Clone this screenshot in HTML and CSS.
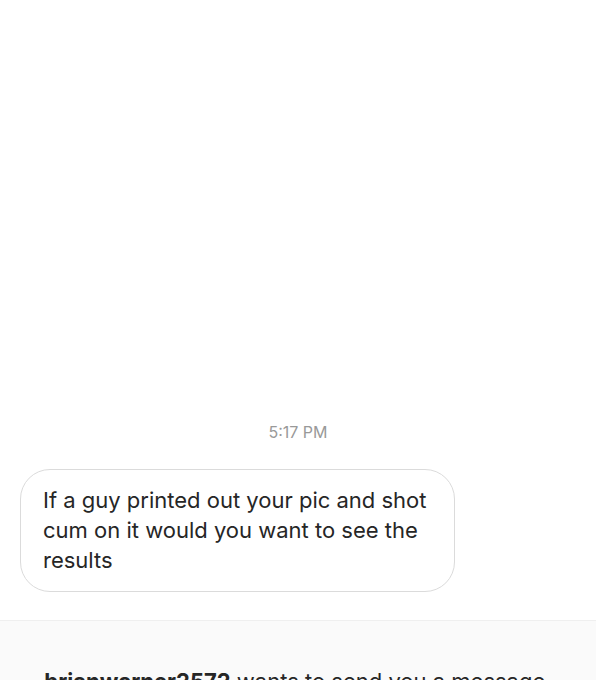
FILE: index.html
```html
<!DOCTYPE html>
<html lang="en">
<head>
<meta charset="utf-8">
<title>Message request</title>
<link rel="stylesheet" href="styles.css">
</head>
<body>
<div class="screen">
  <main class="thread">
    <div class="timestamp">5:17 PM</div>
    <div class="bubble">If a guy printed out your pic and shot cum on it would you want to see the results</div>
  </main>
  <footer class="request">
    <p class="request-text"><strong>brianwarner2572</strong> wants to send you a message.</p>
  </footer>
</div>
</body>
</html>
```
FILE: styles.css
```css
html, body {
  margin: 0;
  padding: 0;
  background: #ffffff;
}
body {
  font-family: Inter, Roboto, "Noto Sans", "Liberation Sans", sans-serif;
  color: #262626;
  overflow: hidden;
}
.screen {
  width: 596px;
  height: 680px;
  display: flex;
  flex-direction: column;
  overflow: hidden;
}
.thread {
  height: 620px;
  box-sizing: border-box;
  flex: none;
  display: flex;
  flex-direction: column;
  justify-content: flex-end;
  padding: 0 0 28px 20px;
}
.timestamp {
  align-self: center;
  margin-left: -20px;
  font-size: 16px;
  line-height: 20px;
  color: #999999;
  margin-bottom: 27px;
}
.bubble {
  width: 435px;
  box-sizing: border-box;
  border: 1px solid #dbdbdb;
  border-radius: 30px;
  padding: 15px 24px 16px 22px;
  font-size: 22px;
  line-height: 30px;
  color: #262626;
}
.request {
  flex: 1;
  background: #fafafa;
  border-top: 1px solid #efefef;
  padding-top: 45px;
}
.request-text {
  margin: 0;
  text-align: center;
  font-size: 22px;
  line-height: 30px;
  color: #262626;
  white-space: nowrap;
}
.request-text strong {
  font-weight: 700;
}
```
